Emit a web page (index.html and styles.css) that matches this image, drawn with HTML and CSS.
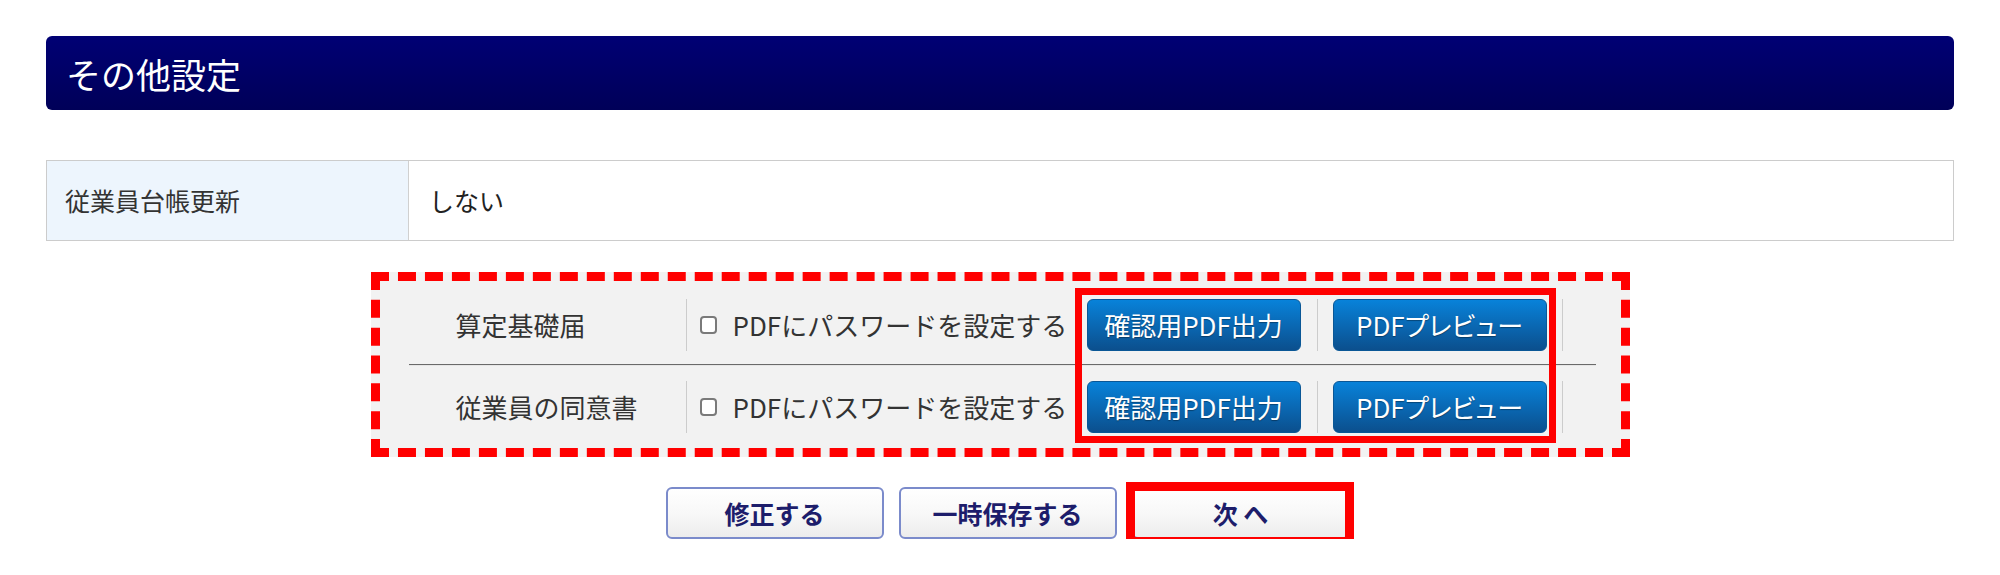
FILE: index.html
```html
<!DOCTYPE html>
<html lang="ja">
<head>
<meta charset="utf-8">
<title>その他設定</title>
<link rel="stylesheet" href="styles.css">
</head>
<body>
<div class="page">
  <h2 class="section-title">その他設定</h2>

  <div class="info-row">
    <div class="info-label">従業員台帳更新</div>
    <div class="info-value">しない</div>
  </div>

  <div class="pdf-box">
    <div class="pdf-row">
      <div class="cell cell-label">算定基礎届</div>
      <div class="cell cell-check sep"><label class="check"><input type="checkbox"><span>PDFにパスワードを設定する</span></label></div>
      <div class="cell cell-btn"><button class="btn-blue">確認用PDF出力</button></div>
      <div class="cell cell-btn sep"><button class="btn-blue">PDFプレビュー</button></div>
      <div class="cell sep"></div>
    </div>
    <hr class="row-divider">
    <div class="pdf-row">
      <div class="cell cell-label">従業員の同意書</div>
      <div class="cell cell-check sep"><label class="check"><input type="checkbox"><span>PDFにパスワードを設定する</span></label></div>
      <div class="cell cell-btn"><button class="btn-blue">確認用PDF出力</button></div>
      <div class="cell cell-btn sep"><button class="btn-blue">PDFプレビュー</button></div>
      <div class="cell sep"></div>
    </div>
    <div class="highlight"></div>
  </div>

  <div class="actions">
    <button class="btn-action">修正する</button>
    <button class="btn-action">一時保存する</button>
    <button class="btn-action btn-next">次 へ</button>
  </div>
</div>
</body>
</html>
```

FILE: styles.css
```css
* { box-sizing: border-box; }

body {
  margin: 0;
  background: #ffffff;
  font-family: "Noto Sans CJK JP", "Noto Sans", sans-serif;
  color: #333333;
}

.page {
  padding: 36px 46px 0 46px;
}

.section-title {
  margin: 0;
  height: 74px;
  display: flex;
  align-items: center;
  padding-left: 20px;
  font-size: 35px;
  font-weight: normal;
  line-height: 1;
  color: #ffffff;
  background: linear-gradient(#000074, #000058);
  border-radius: 6px;
}

.info-row {
  margin-top: 50px;
  display: flex;
  height: 81px;
  border: 1px solid #cccccc;
}

.info-label {
  width: 362px;
  flex: none;
  display: flex;
  align-items: center;
  padding-left: 18px;
  background: #edf5fd;
  border-right: 1px solid #d0d0d0;
  font-size: 25px;
  line-height: 1;
  color: #333333;
}

.info-value {
  flex: 1;
  display: flex;
  align-items: center;
  padding-left: 20px;
  font-size: 25px;
  line-height: 1;
  color: #222222;
}

.pdf-box {
  position: relative;
  width: 1259px;
  margin: 31px auto 0 auto;
  border: 9px dashed #ff0000;
  background: #f2f2f2;
  padding: 0 25px 0 29px;
}

.pdf-row {
  display: grid;
  grid-template-columns: 277px 386px 245px 245px 1fr;
  align-items: center;
  padding: 15px 0;
}

.pdf-row:first-child {
  padding: 18px 0 13px 0;
}

.cell {
  height: 52px;
  display: flex;
  align-items: center;
}

.sep {
  border-left: 1px solid #cccccc;
}

.cell-label {
  padding-left: 47px;
  font-size: 26px;
  line-height: 1;
  color: #333333;
}

.cell-check {
  padding-left: 13px;
}

.check {
  display: flex;
  align-items: center;
  font-size: 26px;
  line-height: 1;
  color: #333333;
  white-space: nowrap;
}

.check input {
  appearance: none;
  -webkit-appearance: none;
  width: 17px;
  height: 18px;
  margin: 0 16px 0 0;
  border: 2px solid #7a7a7a;
  border-radius: 4px;
  background: #ffffff;
}

.cell-btn {
  padding: 0 15px;
}

.btn-blue {
  width: 214px;
  height: 52px;
  padding: 0;
  border: 1px solid #0a5796;
  border-radius: 6px;
  background: linear-gradient(#0882d9, #0a66b0 55%, #0b4f8d);
  color: #ffffff;
  font-family: "Noto Sans CJK JP", "Noto Sans", sans-serif;
  font-size: 26px;
  line-height: 1;
  font-feature-settings: "palt";
  text-shadow: 0 1px 1px rgba(0, 0, 0, 0.35);
}

.row-divider {
  margin: 0;
  height: 0;
  border: 0;
  border-top: 1px solid #6a6a6a;
  border-bottom: 1px solid #e6e6e6;
}

.highlight {
  position: absolute;
  left: 695px;
  top: 7px;
  width: 481px;
  height: 155px;
  border: 7px solid #ff0000;
  pointer-events: none;
}

.actions {
  margin-top: 30px;
  display: flex;
  justify-content: center;
  gap: 15px;
  padding-left: 15px;
}

.btn-action {
  width: 218px;
  height: 52px;
  padding: 0;
  border: 2px solid #7b8bcb;
  border-radius: 6px;
  background: linear-gradient(#ffffff, #f8f8f8 50%, #ececec);
  color: #1d1d6b;
  font-family: "Noto Sans CJK JP", "Noto Sans", sans-serif;
  font-size: 25px;
  font-weight: bold;
  line-height: 1;
}

.btn-next {
  position: relative;
}

.btn-next::after {
  content: "";
  position: absolute;
  left: -8px;
  top: -7px;
  right: -6px;
  bottom: -9px;
  border: 9px solid #ff0000;
  pointer-events: none;
}
```
